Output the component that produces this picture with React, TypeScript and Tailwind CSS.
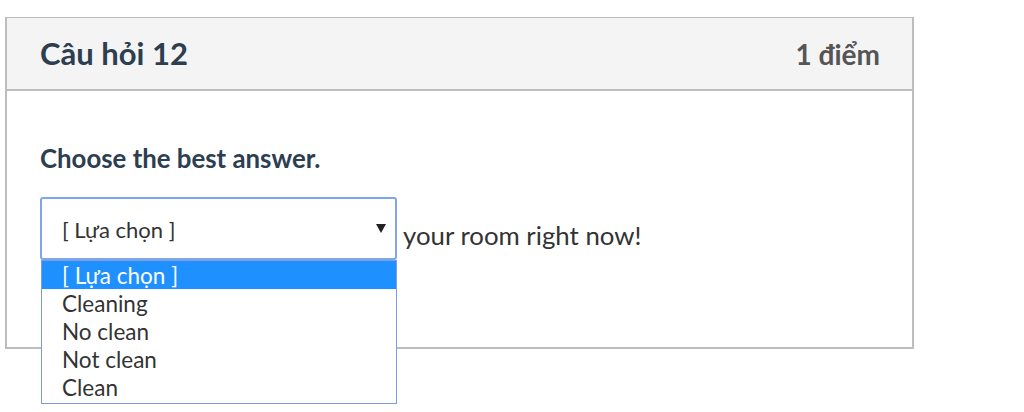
import { useState } from "react";

const options = ["[ Lựa chọn ]", "Cleaning", "No clean", "Not clean", "Clean"];

function FakeSelect() {
  const [selected] = useState(0);
  return (
    <div className="relative w-[357px] shrink-0">
      <div className="flex h-[63px] items-center justify-between rounded-[3px] border-2 border-[#80a6ea] bg-white pl-[20px] pr-[9px]">
        <span className="mt-[2px] text-[22px] text-[#333]">{options[selected]}</span>
        <svg width="10" height="9" viewBox="0 0 10 9" className="mb-[1px]">
          <path d="M0 0h10L5 9z" fill="#222" />
        </svg>
      </div>
      <ul className="absolute left-[1px] top-[63px] z-10 w-[356px] border border-[#7f9ddb] bg-white pb-[2px]">
        {options.map((o, i) => (
          <li
            key={o}
            className={
              i === selected
                ? "h-[28px] bg-[#1e90ff] pl-[20px] text-[22.5px] leading-[30px] text-white"
                : "h-[28px] pl-[20px] text-[22.5px] leading-[30px] text-[#333]"
            }
          >
            {o}
          </li>
        ))}
      </ul>
    </div>
  );
}

export default function App() {
  return (
    <div className="min-h-[412px] bg-white pl-[5px] pt-[17px] font-['Lato','Liberation_Sans',sans-serif]">
      <div className="w-[909px] border-2 border-t border-[#bdbdbd]">
        <div className="flex h-[73px] items-center justify-between border-b-2 border-[#bdbdbd] bg-[#f4f4f4] pl-[33px] pr-[32px]">
          <h2 className="text-[31px] font-bold text-[#2c3e50]">Câu hỏi 12</h2>
          <span className="text-[28px] font-bold text-[#555]">1 điểm</span>
        </div>
        <div className="h-[256px] px-[33px] pt-[51px]">
          <p className="text-[25.8px] font-bold leading-[32px] text-[#2c3e50]">Choose the best answer.</p>
          <div className="mt-[23px] flex items-center">
            <FakeSelect />
            <span className="ml-[6px] mt-[14px] text-[25.8px] text-[#333]">your room right now!</span>
          </div>
        </div>
      </div>
    </div>
  );
}
